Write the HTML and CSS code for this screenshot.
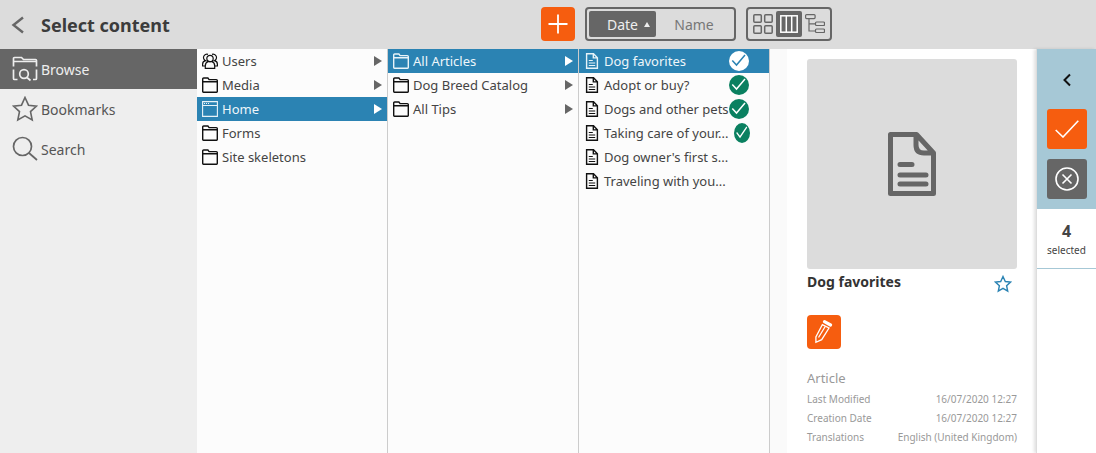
FILE: index.html
```html
<!DOCTYPE html>
<html lang="en">
<head>
    <meta charset="UTF-8">
    <title>Select content</title>
    <link rel="stylesheet" href="styles.css">
</head>
<body>

<svg class="sprites" width="0" height="0">
    <symbol id="i-folder" viewBox="0 0 16 16">
        <path d="M.7 14.500V2q0-1 1-1h4.200l1.200 1.600h7.200q1 0 1 1v10.900q0 .7-.7.7H1.400q-.7 0-.7-.7zM.7 4.800h14.600" fill="none" stroke="currentColor" stroke-width="1.400"/>
    </symbol>
    <symbol id="i-users" viewBox="0 0 16 16">
        <g fill="none" stroke="currentColor" stroke-width="1.200">
            <circle cx="8" cy="5.500" r="3.200"/>
            <path d="M3.300 15.400V13q0-3.500 2.700-4.300h4q2.700.8 2.700 4.300v2.400zM6 1.400A2.800 2.800 0 1 0 3.700 7.700Q.6 8.200.6 11.200V13h2.700M10 1.400a2.800 2.800 0 1 1 2.300 6.300q3.100.5 3.100 3.500V13h-2.700"/>
        </g>
    </symbol>
    <symbol id="i-site" viewBox="0 0 16 16">
        <path d="M.6.6h14.800v14.800H.6zM.6 4.500h14.800" fill="none" stroke="currentColor" stroke-width="1.100"/>
        <path d="M2 2.500h1M4 2.500h1M6 2.500h1" stroke="currentColor" stroke-width="1"/>
    </symbol>
    <symbol id="i-doc" viewBox="0 0 14 16">
        <path d="M1.600.7h6.900l3.900 4v10.600H1.600zM8.300.7v4.200h4" fill="none" stroke="currentColor" stroke-width="1.400"/>
        <path d="M3.800 7.500h4M3.800 10h6.400M3.800 12.500h6.400" stroke="currentColor" stroke-width="1.200"/>
    </symbol>
    <symbol id="i-check" viewBox="0 0 20 20" preserveAspectRatio="none">
        <circle class="check-bg" cx="10" cy="10" r="10"/>
        <path class="check-mark" d="M3.300 9.500 7.500 14 16 4" fill="none" stroke-width="1.500"/>
    </symbol>
</svg>

<header class="topbar">
    <div class="title-block">
        <svg class="back" width="14" height="18" viewBox="0 0 14 18"><path d="M12 1.500 2.500 9l9.500 7.500" fill="none" stroke="#666" stroke-width="2.400"/></svg>
        <h1>Select content</h1>
    </div>
    <button class="add-btn" type="button">
        <svg width="20" height="20" viewBox="0 0 20 20"><path d="M10 .5v19M.5 10h19" stroke="#fff" stroke-width="1.800"/></svg>
    </button>
    <div class="sort-group">
        <span class="sort-item active">Date <i class="sort-arrow"></i></span>
        <span class="sort-item">Name</span>
    </div>
    <div class="view-group">
        <span class="view-item">
            <svg width="20" height="20" viewBox="0 0 20 20"><g fill="none" stroke="#666" stroke-width="1.500"><rect x=".8" y=".8" width="7.500" height="7.500" rx="1"/><rect x="11.700" y=".8" width="7.500" height="7.500" rx="1"/><rect x=".8" y="11.700" width="7.500" height="7.500" rx="1"/><rect x="11.700" y="11.700" width="7.500" height="7.500" rx="1"/></g></svg>
        </span>
        <span class="view-item active">
            <svg width="18" height="18" viewBox="0 0 18 18"><g fill="none" stroke="#fff" stroke-width="1.500"><rect x=".8" y=".8" width="16.400" height="16.400"/><path d="M6.300 1v16M11.700 1v16"/></g></svg>
        </span>
        <span class="view-item">
            <svg width="20" height="20" viewBox="0 0 20 20"><g fill="none" stroke="#666" stroke-width="1.200"><rect x=".6" y=".6" width="9.500" height="4" rx="1"/><rect x="10.500" y="8" width="9" height="3.500" rx="1"/><rect x="10.500" y="15" width="9" height="3.500" rx="1"/><path d="M4 5v12h6.500M4 9.800h6.500"/></g></svg>
        </span>
    </div>
</header>

<div class="main">
    <nav class="sidebar">
        <a class="side-item active">
            <svg width="26" height="26" viewBox="0 0 26 26"><g fill="none" stroke="currentColor" stroke-width="1.700"><path d="M1.500 10.500V2.500q0-1 1-1h7l2 2h12q1 0 1 1v6M1.500 5.500h23M1.500 13.500v9q0 1 1 1h3M21 23.500h2.500q1 0 1-1v-9"/><circle cx="12" cy="18" r="4.300"/><path d="m15 21.500 3.500 3"/></g></svg>
            Browse
        </a>
        <a class="side-item">
            <svg width="26" height="26" viewBox="0 0 26 26"><path d="m13 1.500 3.500 7.700 8 .9-6 5.500 1.700 8.400L13 19.900l-7.200 4.100 1.700-8.400-6-5.500 8-.9z" fill="none" stroke="#666" stroke-width="1.600"/></svg>
            Bookmarks
        </a>
        <a class="side-item">
            <svg width="26" height="26" viewBox="0 0 26 26"><g fill="none" stroke="#666" stroke-width="1.700"><circle cx="10.500" cy="10.500" r="9"/><path d="m17 17 8 7"/></g></svg>
            Search
        </a>
    </nav>

    <section class="column">
        <div class="row"><svg class="row-icon"><use href="#i-users"/></svg><span class="row-text">Users</span><i class="arrow"></i></div>
        <div class="row"><svg class="row-icon"><use href="#i-folder"/></svg><span class="row-text">Media</span><i class="arrow"></i></div>
        <div class="row selected"><svg class="row-icon"><use href="#i-site"/></svg><span class="row-text">Home</span><i class="arrow"></i></div>
        <div class="row"><svg class="row-icon"><use href="#i-folder"/></svg><span class="row-text">Forms</span></div>
        <div class="row"><svg class="row-icon"><use href="#i-folder"/></svg><span class="row-text">Site skeletons</span></div>
    </section>

    <section class="column">
        <div class="row selected"><svg class="row-icon"><use href="#i-folder"/></svg><span class="row-text">All Articles</span><i class="arrow"></i></div>
        <div class="row"><svg class="row-icon"><use href="#i-folder"/></svg><span class="row-text">Dog Breed Catalog</span><i class="arrow"></i></div>
        <div class="row"><svg class="row-icon"><use href="#i-folder"/></svg><span class="row-text">All Tips</span><i class="arrow"></i></div>
    </section>

    <section class="column">
        <div class="row selected"><svg class="row-icon"><use href="#i-doc"/></svg><span class="row-text">Dog favorites</span><svg class="check"><use href="#i-check"/></svg></div>
        <div class="row"><svg class="row-icon"><use href="#i-doc"/></svg><span class="row-text">Adopt or buy?</span><svg class="check"><use href="#i-check"/></svg></div>
        <div class="row"><svg class="row-icon"><use href="#i-doc"/></svg><span class="row-text">Dogs and other pets</span><svg class="check"><use href="#i-check"/></svg></div>
        <div class="row"><svg class="row-icon"><use href="#i-doc"/></svg><span class="row-text">Taking care of your...</span><svg class="check check-small"><use href="#i-check"/></svg></div>
        <div class="row"><svg class="row-icon"><use href="#i-doc"/></svg><span class="row-text">Dog owner's first s...</span></div>
        <div class="row"><svg class="row-icon"><use href="#i-doc"/></svg><span class="row-text">Traveling with you...</span></div>
    </section>

    <aside class="preview">
        <div class="thumb">
            <svg width="48" height="64" viewBox="0 0 48 64"><g fill="none" stroke="#666" stroke-width="5" stroke-linejoin="round" stroke-linecap="round"><path d="M2.500 2.500h26L45.500 21v40.500h-43zM28 3v10q0 8 8 8h9"/><path d="M12 32.500h12M12 43h26M12 52h26"/></g></svg>
        </div>
        <div class="preview-head">
            <h2>Dog favorites</h2>
            <svg width="18" height="18" viewBox="0 0 18 18"><path d="m9 1.500 2.300 5 5.200.6-3.900 3.600 1.100 5.300L9 13.300 4.300 16l1.100-5.300L1.500 7.100l5.200-.6z" fill="none" stroke="#2b83b3" stroke-width="1.400"/></svg>
        </div>
        <button class="edit-btn" type="button">
            <svg width="18" height="24" viewBox="0 0 18 24"><g fill="none" stroke="#fff" stroke-width="1.300"><path d="M7.300 4.700.9 17v5.300l5.800-2.600L14 8z"/><path d="M3.500 17.500 10.200 6.500"/></g><path d="m9.500 1.700 6 3.300" stroke="#fff" stroke-width="3.200" stroke-linecap="round"/></svg>
        </button>
        <div class="meta-type">Article</div>
        <dl class="meta">
            <div class="meta-row"><dt>Last Modified</dt><dd>16/07/2020 12:27</dd></div>
            <div class="meta-row"><dt>Creation Date</dt><dd>16/07/2020 12:27</dd></div>
            <div class="meta-row"><dt>Translations</dt><dd>English (United Kingdom)</dd></div>
        </dl>
    </aside>

    <aside class="selection">
        <div class="selection-actions">
            <svg class="collapse" width="10" height="14" viewBox="0 0 10 14"><path d="M8 1.500 2.500 7 8 12.500" fill="none" stroke="#111" stroke-width="2"/></svg>
            <button class="sel-btn ok" type="button">
                <svg width="24" height="18" viewBox="0 0 24 18"><path d="m.7 10 7.300 7L23.300.7" fill="none" stroke="#fff" stroke-width="1.600"/></svg>
            </button>
            <button class="sel-btn cancel" type="button">
                <svg width="24" height="24" viewBox="0 0 24 24"><g fill="none" stroke="#fff" stroke-width="1.600"><circle cx="12" cy="12" r="11"/><path d="m7.500 7.500 9 9M16.500 7.500l-9 9"/></g></svg>
            </button>
        </div>
        <div class="selection-count">
            <strong>4</strong>
            <span>selected</span>
        </div>
    </aside>
</div>

</body>
</html>
```

FILE: styles.css
```css
* {
    box-sizing: border-box;
}

html, body {
    height: 100%;
}

body {
    margin: 0;
    font-family: "Noto Sans", sans-serif;
    font-size: 13px;
    color: #444;
    background: #fff;
    overflow: hidden;
    display: flex;
    flex-direction: column;
}

button {
    border: none;
    padding: 0;
    cursor: pointer;
    display: flex;
    align-items: center;
    justify-content: center;
}

.sprites {
    display: none;
}

/* Top bar */
.topbar {
    flex: 0 0 49px;
    background: #dcdcdc;
    display: flex;
    align-items: center;
    padding-bottom: 1px;
}

.title-block {
    flex: 0 0 541px;
    display: flex;
    align-items: center;
    padding-left: 11px;
    margin-top: 1px;
}

.title-block h1 {
    margin: 0 0 0 16px;
    font-size: 18px;
    font-weight: 700;
    color: #3c3c3c;
}

.add-btn {
    width: 34px;
    height: 34px;
    border-radius: 4px;
    background: #f65d0f;
}

.sort-group {
    width: 151px;
    height: 34px;
    margin-left: 10px;
    border: 2px solid #666;
    border-radius: 4px;
    padding: 2px;
    display: flex;
}

.sort-item {
    flex: 1;
    display: flex;
    align-items: center;
    justify-content: center;
    color: #777;
    font-size: 14px;
}

.sort-item.active {
    flex: 0 0 67px;
    background: #666;
    color: #eee;
    border-radius: 2px;
    padding-left: 12px;
}

.sort-arrow {
    width: 0;
    height: 0;
    margin-left: 6px;
    border-left: 3px solid transparent;
    border-right: 3px solid transparent;
    border-bottom: 5px solid #eee;
}

.view-group {
    width: 86px;
    height: 34px;
    margin-left: 10px;
    border: 2px solid #666;
    border-radius: 4px;
    padding: 2px;
    display: flex;
    justify-content: space-between;
}

.view-item {
    width: 26px;
    display: flex;
    align-items: center;
    justify-content: center;
}

.view-item.active {
    background: #666;
    border-radius: 2px;
}

/* Main area */
.main {
    flex: 1;
    min-height: 0;
    display: flex;
}

.sidebar {
    flex: 0 0 197px;
    background: #eee;
}

.side-item {
    height: 40px;
    display: flex;
    align-items: center;
    gap: 3px;
    padding-left: 12px;
    font-size: 14px;
    color: #555;
}

.side-item.active {
    background: #666;
    color: #eee;
}

.column {
    flex: 0 0 191px;
    background: #fcfcfc;
    border-right: 1px solid #ccc;
}

.row {
    --check-bg: #0a8060;
    --check-mark: #fff;
    height: 24px;
    display: flex;
    align-items: center;
    padding: 0 5px;
    color: #444;
    white-space: nowrap;
}

.row-icon {
    width: 16px;
    height: 16px;
    flex: none;
    color: #111;
    margin-right: 4px;
}

.row-text {
    flex: 1;
}

.row.selected {
    --check-bg: #fff;
    --check-mark: #2b83b3;
    background: #2b83b3;
    color: #eef6fa;
}

.row.selected .row-icon {
    color: #e8f3f8;
}

.arrow {
    width: 0;
    height: 0;
    border-top: 5px solid transparent;
    border-bottom: 5px solid transparent;
    border-left: 8px solid #666;
}

.row.selected .arrow {
    border-left-color: #fff;
}

.check {
    width: 20px;
    height: 20px;
    flex: none;
    margin-right: 15px;
    margin-left: -20px;
}

.check-small {
    width: 16px;
    margin-right: 14px;
    margin-left: -16px;
}

.check-bg {
    fill: var(--check-bg);
}

.check-mark {
    stroke: var(--check-mark);
}

/* Preview */
.preview {
    flex: 0 0 267px;
    margin-left: -1px;
    padding: 10px 19px 0 37px;
    background: linear-gradient(to right, #fafafa 17px, #fff 17px);
    border-left: 1px solid #ccc;
}

.thumb {
    width: 210px;
    height: 210px;
    background: #dcdcdc;
    border-radius: 3px;
    display: flex;
    align-items: center;
    justify-content: center;
}

.preview-head {
    margin-top: 3px;
    display: flex;
    justify-content: space-between;
    align-items: flex-start;
    padding-right: 5px;
}

.preview-head h2 {
    margin: 0;
    font-size: 14px;
    font-weight: 700;
    color: #333;
}

.preview-head svg {
    margin-top: 3px;
}

.edit-btn {
    width: 34px;
    height: 34px;
    margin-top: 22px;
    border-radius: 4px;
    background: #f65d0f;
}

.meta-type {
    margin-top: 20px;
    color: #999;
    line-height: 18px;
}

.meta {
    margin: 2px 0 0;
    font-size: 10px;
    color: #999;
}

.meta-row {
    height: 19px;
    display: flex;
    justify-content: space-between;
    align-items: center;
}

.meta dd {
    margin: 0;
}

/* Selection panel */
.selection {
    flex: 1;
    border-left: 1px solid #ddd;
    box-shadow: -2px 0 3px rgba(0, 0, 0, .12);
    position: relative;
}

.selection-actions {
    height: 160px;
    background: #a6c8d6;
    display: flex;
    flex-direction: column;
    align-items: center;
    padding-top: 24px;
}

.sel-btn {
    width: 40px;
    height: 40px;
    border-radius: 3px;
    flex: none;
}

.sel-btn.ok {
    background: #f65d0f;
    margin-top: 22px;
}

.sel-btn.cancel {
    background: #666;
    margin-top: 10px;
}

.selection-count {
    height: 60px;
    border-bottom: 1px solid #a6c8d6;
    display: flex;
    flex-direction: column;
    align-items: center;
    padding-top: 11px;
}

.selection-count strong {
    font-size: 16px;
    line-height: 22px;
    color: #444;
}

.selection-count span {
    font-size: 10px;
    line-height: 16px;
    color: #444;
}
```
